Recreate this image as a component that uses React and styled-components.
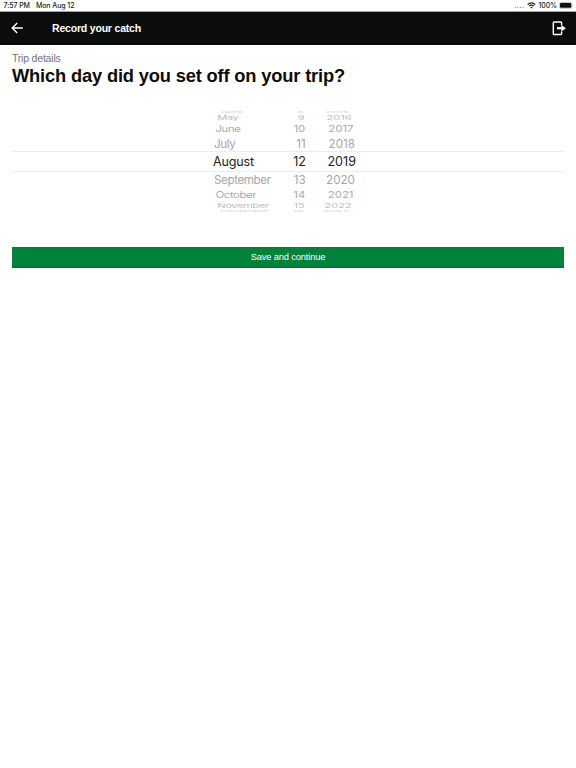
import React from "react";
import styled, { createGlobalStyle } from "styled-components";

const GlobalStyle = createGlobalStyle`
    body {
        margin: 0;
        background: #ffffff;
        font-family: "Liberation Sans", Arial, sans-serif;
    }
`;

const Screen = styled.div`
    width: 576px;
    height: 768px;
    overflow: hidden;
    background: #ffffff;
`;

const StatusBar = styled.div`
    display: flex;
    justify-content: space-between;
    height: 12px;
    box-sizing: border-box;
    padding: 0 2px 0 3.5px;
    border-bottom: 1px solid #a5a5a5;
    font-family: Inter, sans-serif;
    font-size: 7px;
    font-weight: 500;
    line-height: 12px;
    color: #222222;
`;

const StatusGroup = styled.div`
    display: flex;
    align-items: center;
    gap: ${(props) => props.$gap}px;
    letter-spacing: -0.08px;
    white-space: nowrap;
`;

const Header = styled.header`
    display: flex;
    align-items: center;
    height: 33px;
    box-sizing: border-box;
    padding: 0 10px 1px 11px;
    background: #0b0c0c;
    color: #ffffff;
`;

const HeaderTitle = styled.div`
    flex: 1;
    margin-left: 29px;
    font-size: 10.5px;
    font-weight: bold;
    line-height: 12px;
    letter-spacing: -0.19px;
`;

const Content = styled.main`
    padding: 0 12px;
`;

const Caption = styled.div`
    padding-top: 7px;
    font-size: 10.5px;
    line-height: 13px;
    letter-spacing: -0.2px;
    color: #6f777b;
`;

const Title = styled.h1`
    margin: 0;
    font-size: 18.3px;
    line-height: 22px;
    letter-spacing: -0.16px;
    color: #0b0c0c;
    white-space: nowrap;
`;

const Picker = styled.div`
    height: 103px;
    margin-top: 22px;
    font-family: Inter, sans-serif;
`;

const PickerRow = styled.div`
    height: ${(props) => props.$height}px;
    box-sizing: border-box;
    border: solid #ededed;
    border-width: ${(props) => (props.$selected ? "1px 0" : "0")};
    color: ${(props) => props.$color};
    font-size: ${(props) => (props.$selected ? 12.6 : 11.8)}px;
`;

const Values = styled.div`
    display: grid;
    grid-template-columns: 73px 20px 50px;
    align-content: center;
    width: 143px;
    height: 100%;
    margin-left: ${(props) => (props.$selected ? 201 : 200.5)}px;
    line-height: 15px;
    white-space: nowrap;
    transform: translateY(${(props) => (props.$selected ? 0.4 : 1)}px) scale(${(props) => props.$scale});
`;

const Month = styled.span`
    letter-spacing: ${(props) => (props.$selected ? -0.2 : -0.42)}px;
`;

const Day = styled.span`
    text-align: right;
`;

const Year = styled.span`
    text-align: right;
`;

const SaveButton = styled.button`
    display: block;
    width: 100%;
    height: 21px;
    margin-top: 35px;
    padding: 0;
    border: 0;
    border-bottom: 1px solid #086b35;
    background: #00823b;
    color: #ffffff;
    font-family: inherit;
    font-size: 9.3px;
    line-height: 20px;
    letter-spacing: -0.15px;
`;

const dates = [
    { month: "April", day: 8, year: 2015, height: 5, scale: "0.9, 0.22", color: "#d4d4d4" },
    { month: "May", day: 9, year: 2016, height: 7, scale: "0.94, 0.5", color: "#bcbcbc" },
    { month: "June", day: 10, year: 2017, height: 15, scale: "0.965, 0.74", color: "#aaaaaa" },
    { month: "July", day: 11, year: 2018, height: 15, scale: "0.985, 0.95", color: "#a6a6a6" },
    { month: "August", day: 12, year: 2019, height: 21, scale: "1, 1", color: "#222222", selected: true },
    { month: "September", day: 13, year: 2020, height: 15, scale: "0.985, 0.95", color: "#a6a6a6" },
    { month: "October", day: 14, year: 2021, height: 15, scale: "0.965, 0.74", color: "#aaaaaa" },
    { month: "November", day: 15, year: 2022, height: 7, scale: "0.94, 0.5", color: "#bcbcbc" },
    { month: "December", day: 16, year: 2023, height: 3, scale: "0.9, 0.22", color: "#d4d4d4" },
];

function BackIcon() {
    return (
        <svg width="12" height="12" viewBox="0 0 12 12" fill="none" stroke="#fff" strokeWidth="1.4">
            <path d="M11.800 6H1.300M6.200 1L1.200 6l5 5" />
        </svg>
    );
}

function ExitIcon() {
    return (
        <svg width="14" height="15" viewBox="0 0 14 15" fill="none" stroke="#fff" strokeWidth="1.4">
            <path d="M9.600 4V1.700q0-.7-.7-.7H2q-.7 0-.7.7v11.100q0 .7.7.7h6.900q.7 0 .7-.7V10.500" />
            <path d="M5 7.200h5" strokeWidth="2.200" />
            <path d="M9.300 3.700L13.800 7.200l-4.500 3.500z" fill="#fff" stroke="none" />
        </svg>
    );
}

function WifiIcon() {
    return (
        <svg width="9" height="7" viewBox="0 0 9 7" fill="none" stroke="#222" strokeWidth="1.2">
            <path d="M.6 2.500q3.900-3.400 7.800 0M2 4.100q2.500-2.100 5 0" />
            <path d="M3.200 5.200q1.300-1 2.600 0L4.500 6.600z" fill="#222" stroke="none" />
        </svg>
    );
}

function BatteryIcon() {
    return (
        <svg width="15" height="7" viewBox="0 0 15 7">
            <rect x=".3" y=".5" width="12.600" height="5.800" rx="1.500" fill="none" stroke="#888" strokeWidth=".5" />
            <rect x="1" y="1.100" width="11.200" height="4.600" rx=".8" fill="#111" />
            <path d="M13.400 2.400q1 .9 0 1.900z" fill="#888" />
        </svg>
    );
}

function SignalDots() {
    return (
        <svg width="11" height="7" viewBox="0 0 11 7" fill="#999">
            {[1.5, 4, 6.5, 9].map((x) => (
                <circle key={x} cx={x} cy="5.500" r=".7" />
            ))}
        </svg>
    );
}

function App() {
    return (
        <Screen>
            <GlobalStyle />
            <StatusBar>
                <StatusGroup $gap={6}>
                    <span>7:57 PM</span>
                    <span>Mon Aug 12</span>
                </StatusGroup>
                <StatusGroup $gap={2}>
                    <SignalDots />
                    <WifiIcon />
                    <span>100%</span>
                    <BatteryIcon />
                </StatusGroup>
            </StatusBar>
            <Header>
                <BackIcon />
                <HeaderTitle>Record your catch</HeaderTitle>
                <ExitIcon />
            </Header>
            <Content>
                <Caption>Trip details</Caption>
                <Title>Which day did you set off on your trip?</Title>
                <Picker>
                    {dates.map((date) => (
                        <PickerRow key={date.month} $height={date.height} $color={date.color} $selected={date.selected}>
                            <Values $scale={date.scale} $selected={date.selected}>
                                <Month $selected={date.selected}>{date.month}</Month>
                                <Day>{date.day}</Day>
                                <Year>{date.year}</Year>
                            </Values>
                        </PickerRow>
                    ))}
                </Picker>
                <SaveButton>Save and continue</SaveButton>
            </Content>
        </Screen>
    );
}

export default App;
